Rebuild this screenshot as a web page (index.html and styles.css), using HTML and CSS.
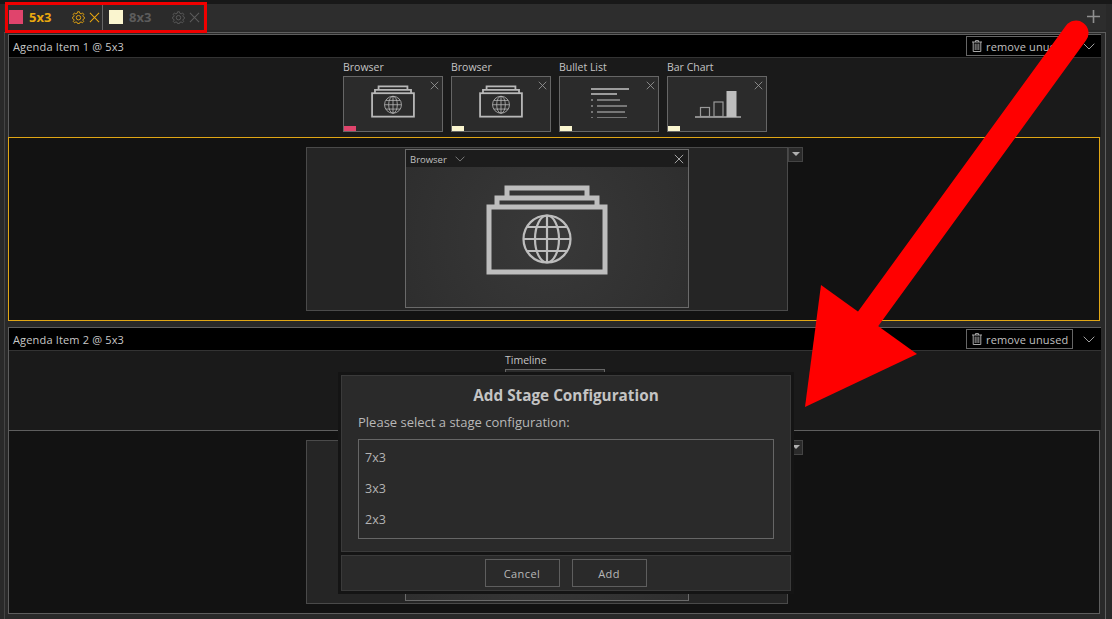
FILE: index.html
```html
<!DOCTYPE html>
<html lang="en">
<head>
<meta charset="utf-8">
<title>Stage Configurations</title>
<link rel="stylesheet" href="styles.css">
</head>
<body>
<svg width="0" height="0" class="defs">
  <defs>
    <symbol id="browser" viewBox="0 0 122 90">
      <path d="M21 13V3H101V13M11 22V13H111V22" fill="none" stroke="currentColor" stroke-width="5"/>
      <rect x="3" y="22" width="116" height="65" fill="none" stroke="currentColor" stroke-width="5"/>
      <g fill="none" stroke="currentColor" stroke-width="2.2">
        <circle cx="61" cy="54" r="23.5"/>
        <ellipse cx="61" cy="54" rx="12" ry="23.5"/>
        <path d="M61 30.5V77.5M37.5 54H84.5M41 42H81M41 66H81"/>
      </g>
    </symbol>
    <symbol id="cross" viewBox="0 0 12 12">
      <path d="M1 1L11 11M11 1L1 11" fill="none" stroke="currentColor" stroke-width="1.1"/>
    </symbol>
    <symbol id="chev" viewBox="0 0 12 7">
      <path d="M.7 .7L6 6L11.3 .7" fill="none" stroke="currentColor" stroke-width="1"/>
    </symbol>
    <symbol id="gear" viewBox="0 0 14 14">
      <path d="M6 .8H8L8.4 2.5L9.9 3.1L11.3 2.1L12.7 3.6L11.7 5L12.3 6.3L13.5 6.8V8L12.3 8.6L11.7 9.9L12.6 11.3L11.2 12.7L9.8 11.8L8.4 12.3L8 13.5H6L5.6 12.3L4.2 11.8L2.8 12.7L1.4 11.3L2.3 9.9L1.7 8.6L.5 8V6.8L1.7 6.3L2.3 5L1.3 3.6L2.7 2.1L4.1 3.1L5.6 2.5Z" fill="none" stroke="currentColor" stroke-width="1"/>
      <circle cx="7" cy="7.2" r="2.4" fill="none" stroke="currentColor" stroke-width="1"/>
    </symbol>
    <symbol id="trash" viewBox="0 0 10 12">
      <path d="M0 2H10M3.5 2V.6H6.5V2M1.2 2V11.5H8.8V2" fill="none" stroke="currentColor" stroke-width="1"/>
      <path d="M3.2 3.6V10M5 3.6V10M6.8 3.6V10" fill="none" stroke="currentColor" stroke-width=".9"/>
    </symbol>
  </defs>
</svg>

<div class="app">
  <header class="tabbar">
    <div class="tab tab-active">
      <span class="swatch swatch-pink"></span>
      <span class="tab-name">5x3</span>
      <svg class="tab-gear"><use href="#gear"/></svg>
      <svg class="tab-x"><use href="#cross"/></svg>
    </div>
    <div class="tab tab-idle">
      <span class="swatch swatch-cream"></span>
      <span class="tab-name">8x3</span>
      <svg class="tab-gear"><use href="#gear"/></svg>
      <svg class="tab-x"><use href="#cross"/></svg>
    </div>
    <svg class="tab-add" viewBox="0 0 13 13"><path d="M6.5 0V13M0 6.5H13" stroke="currentColor" stroke-width="1.6" fill="none"/></svg>
  </header>

  <main class="content">
    <section class="agenda">
      <div class="agenda-head">
        <span class="agenda-title">Agenda Item 1 @ 5x3</span>
        <button class="unused"><svg class="trash"><use href="#trash"/></svg>remove unused</button>
        <svg class="agenda-chev"><use href="#chev"/></svg>
      </div>
      <div class="thumbs">
        <figure class="thumb">
          <figcaption>Browser</figcaption>
          <div class="thumb-box"><svg class="thumb-x"><use href="#cross"/></svg><svg class="thumb-browser"><use href="#browser"/></svg><span class="tag tag-pink"></span></div>
        </figure>
        <figure class="thumb">
          <figcaption>Browser</figcaption>
          <div class="thumb-box"><svg class="thumb-x"><use href="#cross"/></svg><svg class="thumb-browser"><use href="#browser"/></svg><span class="tag tag-cream"></span></div>
        </figure>
        <figure class="thumb">
          <figcaption>Bullet List</figcaption>
          <div class="thumb-box"><svg class="thumb-x"><use href="#cross"/></svg>
            <svg class="thumb-list" viewBox="0 0 38 30"><path d="M0 1H38M0 6H26" stroke="#c4c4c4" stroke-width="1.6"/><path d="M6 12H29M6 18H36M6 24H34M6 30H36" stroke="#c4c4c4" stroke-width="1"/><path d="M0 12H2M0 18H2M0 24H2M0 30H2" stroke="#c4c4c4" stroke-width="1"/></svg>
            <span class="tag tag-cream"></span></div>
        </figure>
        <figure class="thumb">
          <figcaption>Bar Chart</figcaption>
          <div class="thumb-box"><svg class="thumb-x"><use href="#cross"/></svg>
            <svg class="thumb-bars" viewBox="0 0 46 28"><path d="M0 27H46" stroke="#8c8c8c" stroke-width="2"/><rect x="5.5" y="17.5" width="9" height="9" fill="none" stroke="#9a9a9a" stroke-width="1.2"/><rect x="19" y="12" width="9" height="14.5" fill="none" stroke="#9a9a9a" stroke-width="1.2"/><rect x="31.5" y="1" width="10" height="26" fill="#bdbdbd"/></svg>
            <span class="tag tag-cream"></span></div>
        </figure>
      </div>
      <div class="stage stage-active">
        <div class="stage-box">
          <div class="widget">
            <div class="widget-head"><span>Browser</span><svg class="widget-chev"><use href="#chev"/></svg><svg class="widget-x"><use href="#cross"/></svg></div>
            <div class="widget-body"><svg class="widget-browser"><use href="#browser"/></svg></div>
          </div>
        </div>
        <span class="stage-menu"></span>
      </div>
    </section>

    <section class="agenda">
      <div class="agenda-head">
        <span class="agenda-title">Agenda Item 2 @ 5x3</span>
        <button class="unused"><svg class="trash"><use href="#trash"/></svg>remove unused</button>
        <svg class="agenda-chev"><use href="#chev"/></svg>
      </div>
      <div class="thumbs">
        <figure class="thumb">
          <figcaption>Timeline</figcaption>
          <div class="thumb-box"></div>
        </figure>
      </div>
      <div class="stage">
        <div class="stage-box">
          <div class="widget">
            <div class="widget-head"><span>Browser</span></div>
            <div class="widget-body"></div>
          </div>
        </div>
        <span class="stage-menu"></span>
      </div>
    </section>
  </main>
</div>

<div class="callout-box"></div>

<div class="dialog">
  <div class="dialog-main">
    <h2>Add Stage Configuration</h2>
    <p>Please select a stage configuration:</p>
    <ul class="options">
      <li>7x3</li>
      <li>3x3</li>
      <li>2x3</li>
    </ul>
  </div>
  <div class="dialog-foot">
    <button class="btn">Cancel</button>
    <button class="btn">Add</button>
  </div>
</div>

<svg class="arrow" viewBox="0 0 1112 619">
  <path d="M1076 33L860 330" stroke="#ff0000" stroke-width="25" stroke-linecap="round" fill="none"/>
  <path d="M821 285L917 354L805 407Z" fill="#ff0000"/>
</svg>
</body>
</html>
```
FILE: styles.css
```css
* { box-sizing: border-box; }
html, body { margin: 0; padding: 0; }
body {
  position: relative;
  width: 1112px;
  height: 619px;
  overflow: hidden;
  background: #262626;
  color: #c4c4c4;
  font-family: "Open Sans", "Noto Sans", sans-serif;
  font-size: 11px;
}
.defs { position: absolute; }
svg { display: block; }

.app {
  display: flex;
  flex-direction: column;
  height: 619px;
  padding: 4px 6px 0 4px;
  background: linear-gradient(#181818 0 4px, #292929 4px);
}

/* tabs */
.tabbar {
  display: flex;
  align-items: stretch;
  height: 26px;
  padding-left: 3px;
  background: #2d2d2d;
  flex: none;
}
.tab {
  display: flex;
  align-items: center;
  height: 26px;
  padding-left: 1px;
  flex: none;
}
.tab-active { background: #2b2b2b; border-right: 1px solid #666; width: 96px; color: #e9a80f; padding-left: 2px; }
.tab-idle { background: #2b2b2b; color: #5c5c5c; width: 100px; }
.swatch { width: 14px; height: 14px; flex: none; }
.swatch-pink { background: #e0446c; }
.swatch-cream { background: #faf5cf; }
.tab-active .swatch { margin-right: 6px; }
.tab-idle .swatch { margin: 0 6px 0 5px; }
.tab-name { font-size: 13px; font-weight: 700; width: 43px; flex: none; }
.tab-gear { width: 13px; height: 13px; margin-right: 4px; flex: none; }
.tab-x { width: 11px; height: 11px; flex: none; }
.tab-add { width: 13px; height: 13px; color: #8f8f8f; margin: 6px 6px 0 auto; }

/* panels */
.content {
  flex: 1;
  display: flex;
  flex-direction: column;
  gap: 6px;
  margin-top: 2px;
  padding: 1px 4px 0 3px;
  border-top: 1px solid #5e5e5e;
  border-left: 1px solid #444;
  border-right: 1px solid #5e5e5e;
}
.agenda {
  display: flex;
  flex-direction: column;
  flex: none;
  height: 287px;
  border-top: 1px solid #5e5e5e;
  border-left: 1px solid #5e5e5e;
}
.agenda-head {
  display: flex;
  align-items: center;
  height: 23px;
  background: #000;
  padding: 0 5px 0 3px;
  flex: none;
  border-bottom: 1px solid #333;
}
.agenda-title { flex: 1; font-size: 11px; letter-spacing: .16px; color: #c8c8c8; padding-left: 1px; }
.unused {
  display: flex;
  align-items: center;
  width: 107px;
  height: 20px;
  padding: 0 0 0 5px;
  background: #000;
  border: 1px solid #666;
  color: #c0c0c0;
  font: 11px "Open Sans", "Noto Sans", sans-serif;
  letter-spacing: .15px;
  white-space: nowrap;
}
.trash { width: 10px; height: 12px; margin-right: 4px; flex: none; color: #a8a8a8; }
.agenda-chev { width: 12px; height: 7px; margin-left: 10px; margin-right: 1px; color: #a0a0a0; flex: none; }

.thumbs {
  display: flex;
  justify-content: center;
  gap: 8px;
  height: 79px;
  padding-top: 2px;
  background: #1a1a1a;
  flex: none;
}
.thumb { margin: 0; width: 100px; }
.thumb figcaption {
  height: 16px;
  line-height: 15px;
  font-size: 10.5px;
  color: #c4c4c4;
}
.thumb-box {
  position: relative;
  display: flex;
  align-items: center;
  justify-content: center;
  width: 100px;
  height: 56px;
  background: #2b2b2b;
  border: 1px solid #666;
}
.thumb-x { position: absolute; top: 4px; right: 3px; width: 9px; height: 9px; color: #9a9a9a; }
.thumb-browser { width: 44px; height: 33px; color: #b8b8b8; margin-top: -6px; }
.thumb-list { width: 38px; height: 30px; margin-top: -2px; margin-left: 2px; }
.thumb-bars { width: 46px; height: 28px; margin-top: -1px; margin-left: 2px; }
.tag { position: absolute; left: 0; bottom: 0; width: 12px; height: 5px; }
.tag-pink { background: #e0446c; }
.tag-cream { background: #faf5cf; }

.stage {
  flex: 1;
  display: flex;
  justify-content: center;
  align-items: flex-start;
  padding: 9px 0 0 1px;
  margin-left: -1px;
  margin-right: 1px;
  background: #121212;
  border: 1px solid #5e5e5e;
}
.stage-active { border-color: #e0a615; }
.stage-box {
  display: flex;
  justify-content: center;
  width: 482px;
  height: 164px;
  padding-top: 1px;
  background: #252525;
  border: 1px solid #4a4a4a;
}
.stage-menu {
  position: relative;
  width: 15px;
  height: 15px;
  background: #2a2a2a;
  border: 1px solid #444;
  flex: none;
}
.stage-menu::after {
  content: "";
  position: absolute;
  top: 4px;
  left: 3px;
  border: 4px solid transparent;
  border-top: 4px solid #b0b0b0;
  border-bottom: 0;
}
.widget {
  width: 284px;
  height: 159px;
  display: flex;
  flex-direction: column;
  border: 1px solid #6a6a6a;
  background: #333;
}
.widget-head {
  display: flex;
  align-items: center;
  height: 17px;
  padding: 1px 4px 0;
  background: #1c1c1c;
  font-size: 9.5px;
  color: #c0c0c0;
  flex: none;
}
.widget-chev { width: 10px; height: 6px; margin-left: 8px; color: #8a8a8a; }
.widget-x { width: 10px; height: 10px; margin-left: auto; color: #b0b0b0; }
.widget-body {
  flex: 1;
  display: flex;
  align-items: center;
  justify-content: center;
  background: radial-gradient(circle, #393939, #2e2e2e);
}
.widget-browser { width: 122px; height: 90px; color: #bdbdbd; margin-bottom: 15px; }

/* dialog */
.dialog {
  position: absolute;
  left: 338px;
  top: 372px;
  width: 456px;
  height: 222px;
  padding: 3px;
  display: flex;
  flex-direction: column;
  gap: 3px;
  background: #141414;
}
.dialog-main {
  flex: 1;
  padding: 0 16px;
  background: #2a2a2a;
  border: 1px solid #3a3a3a;
}
.dialog-main h2 {
  margin: 7px 0 0;
  height: 24px;
  line-height: 24px;
  text-align: center;
  font-size: 15.3px;
  font-weight: 700;
  color: #c4c4c4;
}
.dialog-main p {
  margin: 5px 0 7px;
  height: 20px;
  line-height: 20px;
  font-size: 13px;
  color: #b8b8b8;
}
.options {
  list-style: none;
  margin: 0;
  padding: 2px 6px;
  height: 100px;
  border: 1px solid #666;
  font-size: 12.5px;
  color: #b4b4b4;
}
.options li { height: 31px; line-height: 31px; }
.dialog-foot {
  display: flex;
  justify-content: center;
  align-items: center;
  gap: 12px;
  height: 36px;
  flex: none;
  padding-right: 1px;
  background: #2a2a2a;
  border: 1px solid #3a3a3a;
}
.btn {
  width: 75px;
  height: 28px;
  padding: 0;
  background: #2a2a2a;
  border: 1px solid #5e5e5e;
  color: #b8b8b8;
  font: 11px "Open Sans", "Noto Sans", sans-serif;
  letter-spacing: .4px;
}

/* annotations */
.callout-box {
  position: absolute;
  left: 5px;
  top: 2px;
  width: 202px;
  height: 31px;
  border: 3px solid #f00000;
}
.arrow { position: absolute; left: 0; top: 0; width: 1112px; height: 619px; pointer-events: none; }
```
